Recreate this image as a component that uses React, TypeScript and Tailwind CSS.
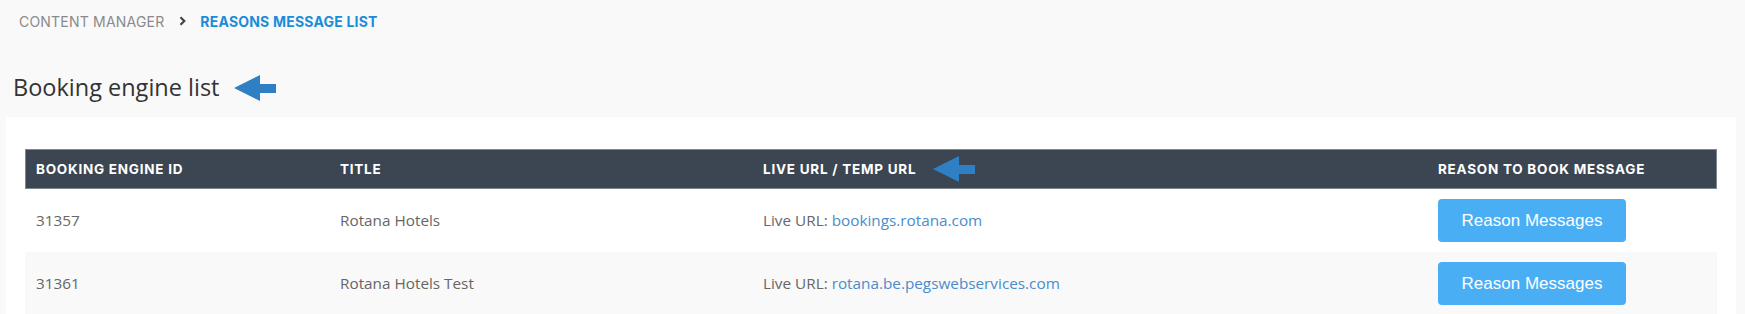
import React from "react";

function LeftArrow({ className }: { className?: string }) {
  return (
    <svg className={className} viewBox="0 0 42 26" width="42" height="26">
      <polygon points="0,13 26,0 26,9 42,9 42,18 26,18 26,26" fill="#2f7fc4" />
    </svg>
  );
}

const rows = [
  { id: "31357", title: "Rotana Hotels", url: "bookings.rotana.com" },
  { id: "31361", title: "Rotana Hotels Test", url: "rotana.be.pegswebservices.com" },
];

export default function App() {
  return (
    <div className="w-[1745px] h-[314px] overflow-hidden bg-[#f9f9f9]">
      <div className="flex items-center h-[42px] pl-[19px] text-[14px] tracking-[0.2px]" style={{ fontFamily: "Inter, 'Open Sans', sans-serif" }}>
        <span className="text-[#8a8a8a]">CONTENT MANAGER</span>
        <svg className="ml-[15px] mr-[14px]" width="7" height="10" viewBox="0 0 7 10">
          <polyline points="1.5,1.2 5.3,5 1.5,8.8" fill="none" stroke="#444" strokeWidth="2.2" />
        </svg>
        <span className="text-[#1a8dd8] font-bold">REASONS MESSAGE LIST</span>
      </div>
      <div className="flex items-center h-[75px] pt-[16px] pl-[13px] gap-[15px]">
        <h1 className="text-[23.5px] text-[#333] font-normal" style={{ fontFamily: "'Open Sans', sans-serif" }}>
          Booking engine list
        </h1>
        <LeftArrow />
      </div>
      <div className="ml-[6px] w-[1730px] bg-white pt-[32px] px-[19px]">
        <div
          className="grid grid-cols-[304px_423px_675px_1fr] h-[40px] items-center bg-[#3b4652] border border-[#7f8891] text-white font-bold text-[13.5px] tracking-[0.75px]"
          style={{ fontFamily: "Inter, 'Open Sans', sans-serif" }}
        >
          <div className="pl-[10px]">BOOKING ENGINE ID</div>
          <div className="pl-[10px]">TITLE</div>
          <div className="pl-[10px] flex items-center gap-[17px]">
            <span>LIVE URL / TEMP URL</span>
            <LeftArrow />
          </div>
          <div className="pl-[10px]">REASON TO BOOK MESSAGE</div>
        </div>
        {rows.map((r, i) => (
          <div
            key={r.id}
            className={`grid grid-cols-[304px_423px_675px_1fr] h-[63px] items-center text-[15.3px] text-[#666] ${i % 2 === 1 ? "bg-[#f9f9f9]" : "bg-white"}`}
            style={{ fontFamily: "'Open Sans', sans-serif" }}
          >
            <div className="pl-[11px]">{r.id}</div>
            <div className="pl-[11px]">{r.title}</div>
            <div className="pl-[11px]">
              Live URL: <span className="text-[#4a8ccc]">{r.url}</span>
            </div>
            <div className="pl-[11px]">
              <button
                className="w-[188px] h-[43px] rounded-[4px] bg-[#4aaef4] text-white text-[17px]"
                style={{ fontFamily: "'Liberation Sans', Arial, sans-serif" }}
              >
                Reason Messages
              </button>
            </div>
          </div>
        ))}
      </div>
    </div>
  );
}
